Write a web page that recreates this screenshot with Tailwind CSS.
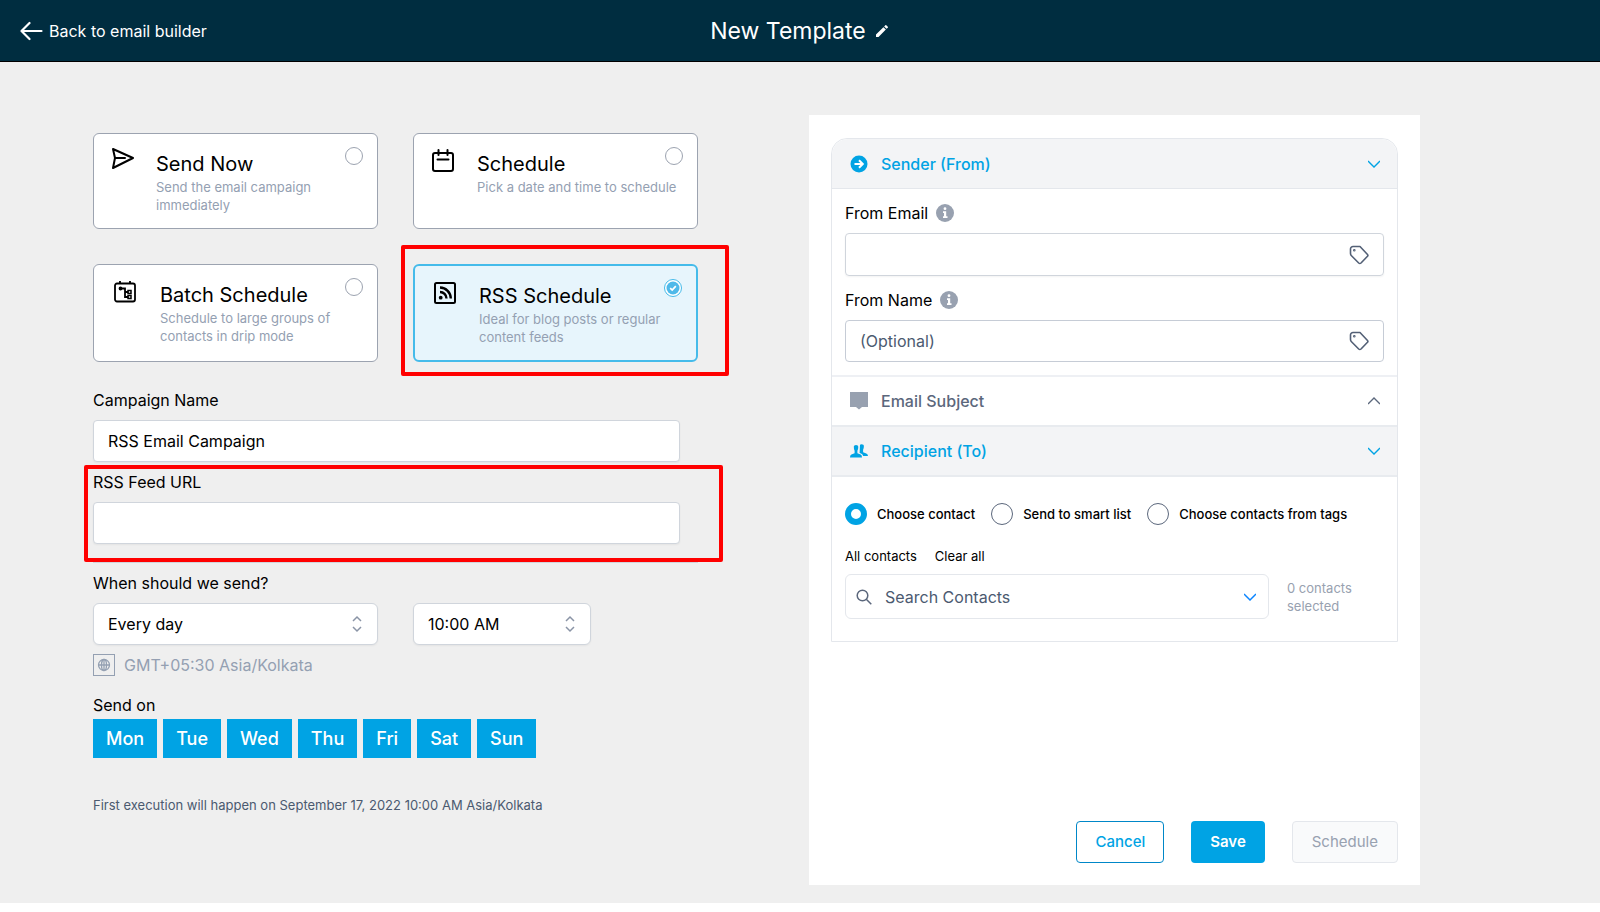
<!DOCTYPE html>
<html lang="en">
<head>
<meta charset="utf-8">
<title>New Template</title>
<script src="https://cdn.jsdelivr.net/npm/@tailwindcss/browser@4"></script>
</head>
<body class="flex min-h-screen flex-col bg-white font-['Inter',sans-serif] text-base leading-6 text-black">

<header class="grid h-[62px] grid-cols-[1fr_auto_1fr] items-center border-b border-black bg-[#002d40] px-5 text-white">
  <a href="#" class="flex items-center gap-[5px]">
    <svg class="h-6 w-6" viewBox="0 0 24 24" fill="none" stroke="currentColor" stroke-width="2.200" stroke-linecap="round" stroke-linejoin="round"><path d="M21.500 12H1.500M9.500 4 1.500 12l8 8"/></svg>
    Back to email builder
  </a>
  <div class="flex items-center gap-2">
    <h1 class="text-[23px] leading-8">New Template</h1>
    <button type="button" aria-label="Rename template">
      <svg class="h-4 w-4" viewBox="0 0 24 24" fill="currentColor"><path d="M3 17.2V21h3.8L17.8 9.9l-3.7-3.7zM20.7 7c.4-.4.4-1 0-1.4l-2.3-2.3a1 1 0 0 0-1.4 0l-1.8 1.8 3.7 3.7z"/></svg>
    </button>
  </div>
</header>

<main class="mb-[9px] grid grow grid-cols-[minmax(0,605fr)_minmax(0,611fr)] gap-[111px] bg-[#efefef] pt-[53px] pr-[180px] pb-[18px] pl-[93px]">

  <form id="campaign" class="pt-[18px]">
    <div class="grid grid-cols-2 gap-x-[35px] gap-y-[35px]">
      <label class="flex h-24 gap-[21px] rounded-md border border-[#9ca3b0] bg-white pt-[13px] pr-[14px] pl-[17px]">
        <svg class="h-6 w-6 shrink-0" viewBox="0 0 24 24" fill="none" stroke="currentColor" stroke-width="2" stroke-linejoin="round" stroke-linecap="round"><path d="M2 2 22 11 2 21l2-10zM4 11h10"/></svg>
        <span class="min-w-0 flex-1">
          <span class="flex h-[30px] items-start justify-between">
            <span class="pt-[3px] text-xl leading-7">Send Now</span>
            <input type="radio" name="mode" class="h-[18px] w-[18px] appearance-none rounded-full border border-[#9ca3b0] bg-white">
          </span>
          <span class="block pt-px text-[13px] leading-[18px] text-[#94a0b2]">Send the email campaign immediately</span>
        </span>
      </label>

      <label class="flex h-24 gap-[22px] rounded-md border border-[#9ca3b0] bg-white pt-[13px] pr-[14px] pl-[17px]">
        <svg class="mt-[2px] h-6 w-6 shrink-0" viewBox="0 0 24 24" fill="none" stroke="currentColor" stroke-width="2" stroke-linecap="round"><rect x="2" y="4" width="20" height="18" rx="2"/><path d="M7.500 1v5M16.500 1v5M6.500 10.500h11"/></svg>
        <span class="min-w-0 flex-1">
          <span class="flex h-[30px] items-start justify-between">
            <span class="pt-[3px] text-xl leading-7">Schedule</span>
            <input type="radio" name="mode" class="h-[18px] w-[18px] appearance-none rounded-full border border-[#9ca3b0] bg-white">
          </span>
          <span class="block pt-px text-[13px] leading-[18px] text-[#94a0b2]">Pick a date and time to schedule</span>
        </span>
      </label>

      <label class="flex h-[98px] gap-[23px] rounded-md border border-[#9ca3b0] bg-white pt-[13px] pr-[14px] pl-[19px]">
        <svg class="mt-[2px] h-6 w-6 shrink-0" viewBox="0 0 24 24" fill="none" stroke="currentColor" stroke-width="1.800"><rect x="2" y="3.500" width="20" height="18" rx="2"/><path d="M7 1v3M17 1v3M8.500 8.500h3.500v8.500h3.500M12 12h3.500"/><circle cx="7.500" cy="8.500" r="1" fill="currentColor"/><rect x="15" y="10.500" width="3" height="3" stroke-width="1.500"/><rect x="15" y="15.500" width="3" height="3" stroke-width="1.500"/></svg>
        <span class="min-w-0 flex-1">
          <span class="flex h-[30px] items-start justify-between">
            <span class="pt-[3px] text-xl leading-7">Batch Schedule</span>
            <input type="radio" name="mode" class="h-[18px] w-[18px] appearance-none rounded-full border border-[#9ca3b0] bg-white">
          </span>
          <span class="block pt-px text-[13px] leading-[18px] text-[#94a0b2]">Schedule to large groups of contacts in drip mode</span>
        </span>
      </label>

      <div class="relative">
        <label class="flex h-[98px] gap-[22px] rounded-md border-2 border-[#45bbea] bg-[#e7f5fc] pt-[13px] pr-[14px] pl-[18px]">
          <svg class="mt-[2px] h-6 w-6 shrink-0" viewBox="0 0 24 24" fill="none" stroke="currentColor" stroke-width="2"><rect x="2" y="2" width="20" height="20" rx="1.500"/><path d="M7 6.500A11 11 0 0 1 17.800 17.500M7 11a6.500 6.500 0 0 1 6.500 6.500" stroke-width="2.400"/><circle cx="7.700" cy="16.700" r="1.900" fill="currentColor" stroke="none"/></svg>
          <span class="min-w-0 flex-1">
            <span class="flex h-[30px] items-start justify-between">
              <span class="pt-[3px] text-xl leading-7">RSS Schedule</span>
              <span class="grid h-[18px] w-[18px]">
                <input type="radio" name="mode" checked class="col-start-1 row-start-1 h-[18px] w-[18px] appearance-none rounded-full border border-[#45bbea] bg-white">
                <svg class="col-start-1 row-start-1 h-[18px] w-[18px]" viewBox="0 0 18 18"><circle cx="9" cy="9" r="6.500" fill="#4fb9e9"/><path d="m6.200 9.200 2 1.900 3.600-3.900" fill="none" stroke="#fff" stroke-width="1.700"/></svg>
              </span>
            </span>
            <span class="block pt-px text-[13px] leading-[18px] text-[#94a0b2]">Ideal for blog posts or regular content feeds</span>
          </span>
        </label>
        <div class="pointer-events-none absolute -top-[19px] -right-[31px] -bottom-[14px] -left-3 rounded-xs border-4 border-[#ff0000]"></div>
      </div>
    </div>

    <div class="flex flex-col gap-2 pt-[26px]">
      <label for="name">Campaign Name</label>
      <input id="name" type="text" value="RSS Email Campaign" class="mr-[18px] h-[42px] rounded-[4px] border border-[#d0d5dc] bg-white px-[14px] shadow-xs">
    </div>

    <div class="relative mt-2 border-b border-[#d0d5dc] pb-[18px]">
      <div class="flex flex-col gap-2">
        <label for="feed">RSS Feed URL</label>
        <input id="feed" type="url" class="mr-[18px] h-[42px] rounded-[4px] border border-[#d0d5dc] bg-white px-[14px] shadow-xs">
      </div>
      <div class="pointer-events-none absolute -top-[5px] -right-[25px] bottom-0 -left-[9px] rounded-xs border-4 border-[#ff0000]"></div>
    </div>

    <div class="grid grid-cols-[285fr_320fr] gap-y-2 pt-2">
      <label for="freq" class="col-span-2">When should we send?</label>
      <div class="relative">
        <select id="freq" class="h-[42px] w-full appearance-none rounded-md border border-[#d0d5dc] bg-white px-[14px] shadow-xs"><option>Every day</option></select>
        <svg class="pointer-events-none absolute top-3 right-[15px] h-[18px] w-3" viewBox="0 0 12 18" fill="none" stroke="#8a94a6" stroke-width="1.500"><path d="m2 6 4-4 4 4M2 12l4 4 4-4"/></svg>
      </div>
      <div class="relative ml-[35px] max-w-[178px]">
        <select aria-label="Send time" class="h-[42px] w-full appearance-none rounded-md border border-[#d0d5dc] bg-white px-[14px] shadow-xs"><option>10:00 AM</option></select>
        <svg class="pointer-events-none absolute top-3 right-[15px] h-[18px] w-3" viewBox="0 0 12 18" fill="none" stroke="#8a94a6" stroke-width="1.500"><path d="m2 6 4-4 4 4M2 12l4 4 4-4"/></svg>
      </div>
    </div>

    <p class="mt-2 flex items-center gap-[9px] text-[#94a0b2]">
      <svg class="h-[22px] w-[22px]" viewBox="0 0 22 22" fill="none" stroke="currentColor"><rect x=".500" y=".500" width="21" height="21"/><g stroke-width="1.300"><circle cx="11" cy="11" r="5.500"/><ellipse cx="11" cy="11" rx="2.500" ry="5.500"/><path d="M5.500 11h11M11 5.500v11"/></g></svg>
      GMT+05:30 Asia/Kolkata
    </p>

    <fieldset class="mt-4">
      <legend>Send on</legend>
      <div class="mt-[2px] flex gap-[6px] text-lg font-medium text-white">
        <button type="button" class="h-[39px] bg-[#00a3e4] px-[13px]">Mon</button>
        <button type="button" class="h-[39px] bg-[#00a3e4] px-[13px]">Tue</button>
        <button type="button" class="h-[39px] bg-[#00a3e4] px-[13px]">Wed</button>
        <button type="button" class="h-[39px] bg-[#00a3e4] px-[13px]">Thu</button>
        <button type="button" class="h-[39px] bg-[#00a3e4] px-[13px]">Fri</button>
        <button type="button" class="h-[39px] bg-[#00a3e4] px-[13px]">Sat</button>
        <button type="button" class="h-[39px] bg-[#00a3e4] px-[13px]">Sun</button>
      </div>
    </fieldset>

    <p class="mt-[37px] text-[13px] leading-5 text-[#4b5a70]">First execution will happen on September 17, 2022 10:00 AM Asia/Kolkata</p>
  </form>

  <section class="flex flex-col bg-white px-[22px] pt-[23px] pb-[22px]">
    <div class="rounded-t-2xl border border-[#e4e7ec]">
      <button type="button" class="flex h-[49px] w-full items-center gap-[13px] rounded-t-2xl bg-[#f3f4f6] pr-[17px] pl-[18px] font-medium text-[#00a3e4]">
        <svg class="h-[18px] w-[18px]" viewBox="0 0 18 18"><circle cx="9" cy="9" r="8.500" fill="currentColor"/><path d="M4.500 9h8M9 5.200 12.800 9 9 12.800" fill="none" stroke="#fff" stroke-width="2"/></svg>
        Sender (From)
        <svg class="ml-auto h-3 w-3" viewBox="0 0 12 12" fill="none" stroke="currentColor" stroke-width="1.400"><path d="m0 3 6 6 6-6"/></svg>
      </button>
      <div class="border-t border-[#e4e7ec] px-[13px] pt-3 pb-[13px]">
        <div class="flex items-center gap-2">
          <label for="fe">From Email</label>
          <svg class="h-[18px] w-[18px]" viewBox="0 0 18 18"><circle cx="9" cy="9" r="9" fill="#98a1b0"/><path d="M7 7.300h3.200v5h1.300V14H7v-1.700h1V9H7z" fill="#fff"/><circle cx="9" cy="4.700" r="1.400" fill="#fff"/></svg>
        </div>
        <div class="mt-2 flex h-[43px] items-center rounded-[4px] border border-[#d0d5dc] shadow-xs">
          <input id="fe" type="email" class="h-full min-w-0 flex-1 px-[14px]">
          <svg class="mr-[14px] h-5 w-5" viewBox="0 0 20 20" fill="none" stroke="#536076" stroke-width="1.600" stroke-linejoin="round"><path d="M1.500 4a2.500 2.500 0 0 1 2.500-2.500h7l7.500 8q.800.900 0 1.700L12 18q-1.200 1-2.300 0l-7.200-7.200q-1-1-1-2.300z"/><circle cx="5.300" cy="5.300" r=".500"/></svg>
        </div>
        <div class="mt-3 flex items-center gap-2">
          <label for="fn">From Name</label>
          <svg class="h-[18px] w-[18px]" viewBox="0 0 18 18"><circle cx="9" cy="9" r="9" fill="#98a1b0"/><path d="M7 7.300h3.200v5h1.300V14H7v-1.700h1V9H7z" fill="#fff"/><circle cx="9" cy="4.700" r="1.400" fill="#fff"/></svg>
        </div>
        <div class="mt-2 flex h-[42px] items-center rounded-[4px] border border-[#c6ccd6]">
          <input id="fn" type="text" placeholder="(Optional)" class="h-full min-w-0 flex-1 px-[14px] placeholder:text-[#4b5a70]">
          <svg class="mr-[14px] h-5 w-5" viewBox="0 0 20 20" fill="none" stroke="#536076" stroke-width="1.600" stroke-linejoin="round"><path d="M1.500 4a2.500 2.500 0 0 1 2.500-2.500h7l7.500 8q.800.900 0 1.700L12 18q-1.200 1-2.300 0l-7.200-7.200q-1-1-1-2.300z"/><circle cx="5.300" cy="5.300" r=".500"/></svg>
        </div>
      </div>
      <button type="button" class="flex h-[50px] w-full items-center gap-[13px] border-t-2 border-[#eef0f4] pr-[17px] pl-[18px] font-medium text-[#5b677c]">
        <svg class="h-[18px] w-[18px]" viewBox="0 0 18 18" fill="#98a1b0"><path d="M0 0h18v15h-6l-3 2.500L6 15H0z"/></svg>
        Email Subject
        <svg class="ml-auto h-3 w-3" viewBox="0 0 12 12" fill="none" stroke="currentColor" stroke-width="1.400"><path d="m0 9 6-6 6 6"/></svg>
      </button>
      <button type="button" class="flex h-[52px] w-full items-center gap-[13px] border-y-2 border-[#e8ebef] bg-[#f3f4f6] pr-[17px] pl-[18px] font-medium text-[#00a3e4]">
        <svg class="h-[18px] w-[18px]" viewBox="0 0 18 18" fill="currentColor"><path d="M3.800 4.500Q3.800 3 6 3q2.300 0 2.300 1.700 0 2.500-.900 4v2.500l3.200 1.300q1.400.700 1.400 3H0q0-2.300 1.400-3l3.200-1.300V8.700q-.800-1.500-.800-4.200zM10 3q0-.800 1.700-.800 2.200 0 2.200 1.600 0 2.600-.800 4v2.400l3.200 1.300q1.700.700 1.700 2.500h-4.800q-.400-1.700-2.200-2.500L9.600 10.900Z"/></svg>
        Recipient (To)
        <svg class="ml-auto h-3 w-3" viewBox="0 0 12 12" fill="none" stroke="currentColor" stroke-width="1.400"><path d="m0 3 6 6 6-6"/></svg>
      </button>
      <div class="px-[13px] pt-[25px] pb-[22px]">
        <div class="flex items-center gap-4 text-[13px] leading-6 font-medium">
          <label class="flex items-center gap-[10px]"><input type="radio" name="to" checked class="h-[22px] w-[22px] appearance-none rounded-full border-[6px] border-[#00a3e4] bg-white">Choose contact</label>
          <label class="flex items-center gap-[10px]"><input type="radio" name="to" class="h-[22px] w-[22px] appearance-none rounded-full border border-[#5b677c] bg-white">Send to smart list</label>
          <label class="flex items-center gap-[10px]"><input type="radio" name="to" class="h-[22px] w-[22px] appearance-none rounded-full border border-[#5b677c] bg-white">Choose contacts from tags</label>
        </div>
        <div class="mt-[18px] flex gap-[18px] text-[13px] leading-6">
          <a href="#">All contacts</a>
          <a href="#">Clear all</a>
        </div>
        <div class="mt-[6px] flex items-center">
          <div class="flex h-[45px] flex-1 items-center rounded-md border border-[#e4e7ec] pr-3 pl-[10px]">
            <svg class="h-4 w-4" viewBox="0 0 16 16" fill="none" stroke="#5b677c" stroke-width="1.500"><circle cx="6.500" cy="6.500" r="5.300"/><path d="m10.300 10.300 5 5"/></svg>
            <input type="text" placeholder="Search Contacts" aria-label="Search Contacts" class="h-full min-w-0 flex-1 px-[13px] placeholder:text-[#4b5a70]">
            <svg class="h-3 w-3" viewBox="0 0 12 12" fill="none" stroke="#0a84ff" stroke-width="1.500"><path d="m0 3 6 6 6-6"/></svg>
          </div>
          <p class="ml-[18px] w-[97px] text-[13px] leading-[18px] text-[#98a1b0]">0 contacts selected</p>
        </div>
      </div>
    </div>
    <div class="mt-auto flex justify-end gap-[27px] text-[15px]">
      <button type="button" class="h-[42px] rounded-[4px] border border-[#0087c8] px-[18px] font-medium text-[#00a3e4]">Cancel</button>
      <button type="button" class="h-[42px] rounded-[4px] bg-[#00a3e4] px-[19px] font-semibold text-white">Save</button>
      <button type="button" disabled class="h-[42px] rounded-[4px] border border-[#e4e7ec] bg-[#f9fafb] px-[19px] text-[#98a1b0]">Schedule</button>
    </div>
  </section>
</main>
</body>
</html>
